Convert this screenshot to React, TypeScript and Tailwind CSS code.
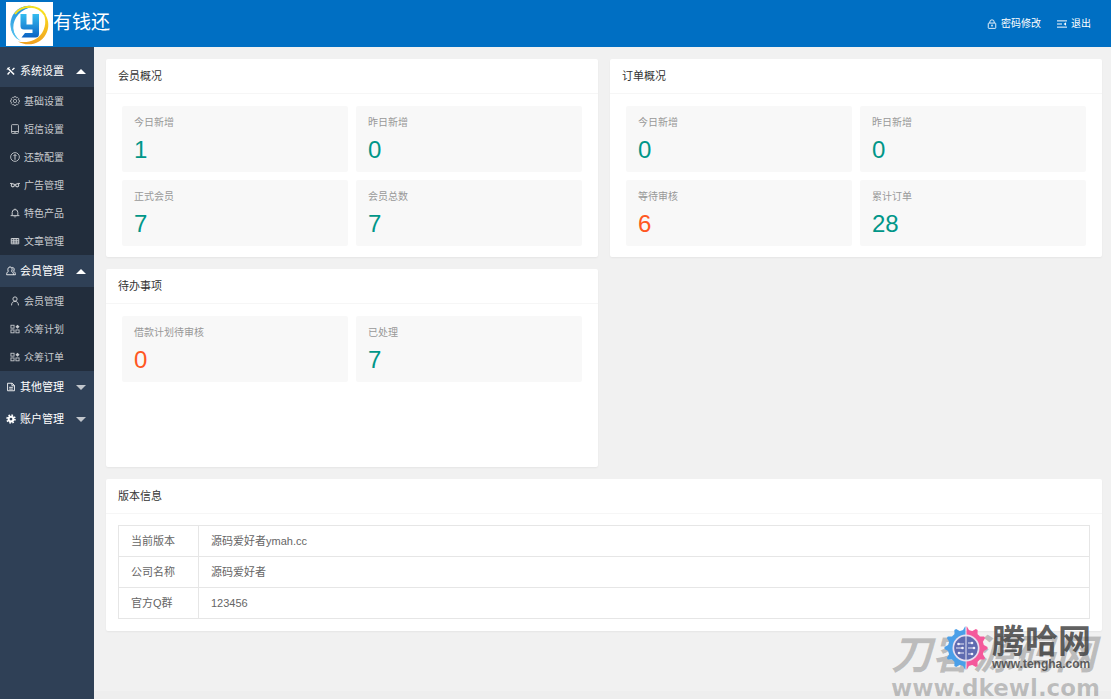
import type { ReactNode } from "react";
import clsx from "clsx";

type IconName =
  | "tools"
  | "cog"
  | "phone"
  | "coin"
  | "link"
  | "bell"
  | "grid"
  | "users"
  | "user"
  | "blocks"
  | "file"
  | "gear"
  | "lock"
  | "exit";

const iconShapes: Record<IconName, ReactNode> = {
  tools: (
    <>
      <path d="M2.5 3l10.500 10.500" strokeWidth="2.4" />
      <path d="M1.500 6L6 1.500" strokeWidth="1.6" />
      <path d="M13.5 3L10 6.500M6 9.5L2.500 13.500" strokeWidth="2.2" />
    </>
  ),
  cog: (
    <>
      <circle cx="8" cy="8" r="2.6" strokeWidth="1.2" />
      <path
        d="M6.500 1h3l.6 2 1.900-.8 2 2-.9 1.900 2 .6v2.800l-2 .6.9 1.900-2 2-1.900-.9-.6 2h-3l-.6-2-1.900.9-2-2 .9-1.900-2-.6V6.700l2-.6L2 4.200l2-2 1.900.8z"
        strokeWidth="1.2"
      />
    </>
  ),
  phone: (
    <>
      <rect x="2.5" y="1" width="11" height="14" rx="1.2" />
      <path d="M2.5 12h11M7 13.5h2" />
    </>
  ),
  coin: (
    <>
      <circle cx="8" cy="8" r="7" />
      <path d="M8 4v8.500M5.500 6.500L8 4l2.500 2.500" strokeWidth="1.600" />
    </>
  ),
  link: (
    <>
      <circle cx="4.500" cy="8.500" r="2.500" strokeWidth="1.800" />
      <circle cx="11.500" cy="8.500" r="2.500" strokeWidth="1.800" />
      <path d="M0 5.500h4M12 5.500h4M6.500 7.500h3" strokeWidth="1.600" />
    </>
  ),
  bell: (
    <>
      <path d="M3.5 12V7a4.5 4.5 0 019 0v5M1 12.200h14M8 1v1.5" strokeWidth="1.600" />
      <path d="M6.500 13.500a1.600 1.600 0 003 0" />
    </>
  ),
  grid: <path d="M2 4h12v8.500H2zM2 6.800h12M2 9.700h12M6 4v8.500M10 4v8.500" strokeWidth="1.600" />,
  users: (
    <>
      <path d="M3.5 9C2 4 4 1.500 6.500 1.500S11 4 9 8.800c2 .8 3 2.500 3 5.200H1c0-2.800 1-4.300 2.500-5z" />
      <path d="M10 2.200c3 0 4 3.500 2.200 6.300 1.800.8 2.800 2.500 2.800 5.500h-3" />
    </>
  ),
  user: (
    <>
      <circle cx="8" cy="4.800" r="3.400" strokeWidth="1.600" />
      <path d="M2.500 15c0-4.300 2-6.300 5.500-6.300s5.500 2 5.500 6.300" strokeWidth="1.600" />
    </>
  ),
  blocks: (
    <>
      <rect x="1.500" y="2" width="5" height="4.600" />
      <rect x="1.500" y="9.500" width="5" height="4.600" />
      <rect x="9.500" y="9.500" width="5" height="4.600" />
      <path d="M12 1l3.300 3.300L12 7.600 8.700 4.300z" fill="currentColor" stroke="none" />
    </>
  ),
  file: (
    <>
      <path d="M2.500 2h7.500l3.500 3.500V14h-11z" />
      <path d="M9.500 2v4h4M5 8.500h6M5 11.300h6" />
    </>
  ),
  gear: (
    <>
      <circle cx="8" cy="8" r="3.800" strokeWidth="3.200" />
      <circle cx="8" cy="8" r="6.300" strokeDasharray="2.500 2.450" strokeWidth="2.600" />
    </>
  ),
  lock: (
    <>
      <rect x="2" y="6.500" width="12" height="8.500" rx="1" />
      <path d="M4.500 6.500V4.800a3.500 3.500 0 017 0v1.700M8 9.300v3M6.800 10h2.400" />
    </>
  ),
  exit: (
    <>
      <path d="M0 3h16M0 8h8M0 13h16" strokeWidth="1.600" />
      <path d="M14.500 5.200v5.600L10.500 8z" fill="currentColor" stroke="none" />
    </>
  ),
};

function Icon({ name, className }: { name: IconName; className?: string }) {
  return (
    <svg
      viewBox="0 0 16 16"
      className={clsx("size-2.5 shrink-0", className)}
      fill="none"
      stroke="currentColor"
      strokeWidth="1.400"
      aria-hidden="true"
    >
      {iconShapes[name]}
    </svg>
  );
}

type Group = {
  label: string;
  icon: IconName;
  items: { label: string; icon: IconName }[];
};

const menu: Group[] = [
  {
    label: "系统设置",
    icon: "tools",
    items: [
      { label: "基础设置", icon: "cog" },
      { label: "短信设置", icon: "phone" },
      { label: "还款配置", icon: "coin" },
      { label: "广告管理", icon: "link" },
      { label: "特色产品", icon: "bell" },
      { label: "文章管理", icon: "grid" },
    ],
  },
  {
    label: "会员管理",
    icon: "users",
    items: [
      { label: "会员管理", icon: "user" },
      { label: "众筹计划", icon: "blocks" },
      { label: "众筹订单", icon: "blocks" },
    ],
  },
  { label: "其他管理", icon: "file", items: [] },
  { label: "账户管理", icon: "gear", items: [] },
];

type Stat = { label: string; value: number; alert?: boolean };

const memberStats: Stat[] = [
  { label: "今日新增", value: 1 },
  { label: "昨日新增", value: 0 },
  { label: "正式会员", value: 7 },
  { label: "会员总数", value: 7 },
];

const orderStats: Stat[] = [
  { label: "今日新增", value: 0 },
  { label: "昨日新增", value: 0 },
  { label: "等待审核", value: 6, alert: true },
  { label: "累计订单", value: 28 },
];

const todoStats: Stat[] = [
  { label: "借款计划待审核", value: 0, alert: true },
  { label: "已处理", value: 7 },
];

const versionRows = [
  ["当前版本", "源码爱好者ymah.cc"],
  ["公司名称", "源码爱好者"],
  ["官方Q群", "123456"],
];

function Logo() {
  return (
    <svg viewBox="0 0 47 44" className="h-11 w-[47px] bg-white" aria-hidden="true">
      <defs>
        <linearGradient id="ring" x1="0" y1="0" x2="0" y2="1">
          <stop offset="0" stopColor="#fbe21c" />
          <stop offset="1" stopColor="#f0a020" />
        </linearGradient>
        <linearGradient id="arc" x1="0" y1="0" x2="0" y2="1">
          <stop offset="0" stopColor="#1d8fdc" />
          <stop offset="1" stopColor="#5cc8f0" />
        </linearGradient>
        <linearGradient id="mark" x1="0" y1="0" x2="0" y2="1">
          <stop offset="0" stopColor="#35bdf0" />
          <stop offset="1" stopColor="#0b62c4" />
        </linearGradient>
      </defs>
      <path d="M28 4.500A18.500 18.500 0 0015 39C2 32 5 8 28 4.500z" fill="url(#arc)" />
      <path d="M28 4.500C3 8 2 30 15 39-1 33 1 5 28 4.500z" fill="url(#arc)" />
      <path d="M9 12A18.500 18.500 0 0139 13" fill="none" stroke="#f7e01e" strokeWidth="2" />
      <path
        d="M35 7.500C46 17 44 33 33 39.500 26 43.500 18 43 12 39.500 22 41.500 31 38.500 36 31 41 23 40 14 35 7.500z"
        fill="url(#ring)"
      />
      <path
        d="M14.500 12H20.500v10.500h6V12H33v20q0 3.500-3.500 3.500H15.500l3.500-4.500h7.500v-3.500H18q-3.500 0-3.500-3.500z"
        fill="url(#mark)"
      />
    </svg>
  );
}

function Sidebar() {
  return (
    <nav className="w-[94px] shrink-0 bg-[#2f4056] pt-2 text-white">
      {menu.map((group) => {
        const open = group.items.length > 0;
        return (
          <div key={group.label}>
            <button
              type="button"
              aria-expanded={open}
              className="flex h-8 w-full items-center pl-1.5 pr-2 text-[11px]"
            >
              <Icon name={group.icon} className="mr-1" />
              <span className="whitespace-nowrap">{group.label}</span>
              <svg
                viewBox="0 0 10 5"
                className={clsx("ml-auto h-[5px] w-2.5", !open && "rotate-180 opacity-70")}
                aria-hidden="true"
              >
                <path d="M0 5L5 0l5 5z" fill="currentColor" />
              </svg>
            </button>
            {open && (
              <ul className="bg-[#222d3c] text-[#c8cbcf]">
                {group.items.map((item) => (
                  <li key={item.label}>
                    <a href="#" className="flex h-7 items-center gap-1 pl-2.5 text-[10px]">
                      <Icon name={item.icon} />
                      {item.label}
                    </a>
                  </li>
                ))}
              </ul>
            )}
          </div>
        );
      })}
    </nav>
  );
}

function Card({ title, children }: { title: string; children: ReactNode }) {
  return (
    <section className="rounded-xs bg-white shadow-[0_1px_2px_rgba(0,0,0,0.05)]">
      <h2 className="h-[35px] border-b border-[#f6f6f6] px-3 text-[11px] leading-[34px] text-[#333]">
        {title}
      </h2>
      {children}
    </section>
  );
}

function StatCard({ title, stats }: { title: string; stats: Stat[] }) {
  return (
    <Card title={title}>
      <div className="grid min-h-[163px] grid-cols-2 content-start gap-2 px-4 pt-3 pb-[11px]">
        {stats.map((stat) => (
          <div key={stat.label} className="h-[66px] rounded-xs bg-[#f8f8f8] px-3 pt-2">
            <h3 className="text-[10px] leading-[18px] text-[#999]">{stat.label}</h3>
            <p
              className={clsx(
                "text-2xl leading-9",
                stat.alert ? "text-[#ff5722]" : "text-[#009688]",
              )}
            >
              {stat.value}
            </p>
          </div>
        ))}
      </div>
    </Card>
  );
}

function GearMark() {
  const teeth = Array.from({ length: 12 }, (_, i) => i * 30);
  return (
    <svg viewBox="0 0 44 44" className="size-11 shrink-0" aria-hidden="true">
      <defs>
        <linearGradient id="halves">
          <stop offset="0.500" stopColor="#4a9fe8" />
          <stop offset="0.500" stopColor="#f4599b" />
        </linearGradient>
        <mask id="gear-shape">
          <circle cx="22" cy="22" r="18" fill="#fff" />
          {teeth.map((a) => (
            <path key={a} d="M18.500 5L21 .5h2L25.500 5z" fill="#fff" transform={`rotate(${a} 22 22)`} />
          ))}
          <path d="M22 0v44" stroke="#000" />
        </mask>
      </defs>
      <rect width="44" height="44" fill="url(#halves)" mask="url(#gear-shape)" />
      <circle cx="22" cy="22" r="13.500" fill="#e8dff0" />
      <circle cx="22" cy="22" r="11.800" fill="#5f6bb0" />
      <g fill="none" stroke="#e8e6f4" strokeWidth="1">
        <path d="M22 9v26M14 18h6M12 22h7M15 27h5M24 17h4M24 22h6M24 28h4" />
      </g>
      <g fill="#f2f0fa">
        <circle cx="14.500" cy="18" r="1.300" />
        <circle cx="18.500" cy="22" r="1.300" />
        <circle cx="15" cy="27" r="1.300" />
        <circle cx="28" cy="17" r="1.300" />
        <circle cx="30" cy="22" r="1.300" />
        <circle cx="28" cy="28" r="1.300" />
      </g>
    </svg>
  );
}

// Site stamps that float over the bottom right corner of the page
function Watermarks() {
  return (
    <div className="pointer-events-none absolute right-3 bottom-0 h-[76px] w-[208px] font-bold whitespace-nowrap">
      <div className="absolute bottom-0 left-0 text-black/22">
        <p className="text-[41px] leading-[43px] italic">刀客源码网</p>
        <p className="font-['DejaVu_Sans'] text-[23px] leading-[22px]">www.dkewl.com</p>
      </div>
      <div className="absolute top-[3px] right-2 flex items-center gap-1">
        <GearMark />
        <div className="text-[#444]/85">
          <p className="text-[33px] leading-8">腾哈网</p>
          <p className="text-xs leading-3">www.tengha.com</p>
        </div>
      </div>
    </div>
  );
}

export default function App() {
  return (
    <div className="relative flex min-h-screen flex-col bg-[#f1f1f1] font-['Liberation_Sans','Noto_Sans_CJK_SC',sans-serif]">
      <header className="flex h-[47px] items-center bg-[#006fc3] pr-5 pl-1.5 text-white">
        <Logo />
        <h1 className="text-[19px]">有钱还</h1>
        <div className="ml-auto flex gap-4 text-[10px]">
          <a href="#" className="flex items-center gap-1">
            <Icon name="lock" />
            密码修改
          </a>
          <a href="#" className="flex items-center gap-1">
            <Icon name="exit" />
            退出
          </a>
        </div>
      </header>
      <div className="flex flex-1">
        <Sidebar />
        <div className="flex min-w-0 flex-1 flex-col">
          <main className="flex flex-1 flex-col gap-3 pt-3 pr-[9px] pl-3">
            <div className="grid grid-cols-2 gap-3">
              <StatCard title="会员概况" stats={memberStats} />
              <StatCard title="订单概况" stats={orderStats} />
              <StatCard title="待办事项" stats={todoStats} />
            </div>
            <Card title="版本信息">
              <div className="p-3 pt-[11px]">
                <table className="w-full border-collapse text-[11px] text-[#666]">
                  <tbody>
                    {versionRows.map(([label, value]) => (
                      <tr key={label} className="h-[31px]">
                        <th
                          scope="row"
                          className="w-20 border border-[#e6e6e6] px-3 text-left font-normal whitespace-nowrap"
                        >
                          {label}
                        </th>
                        <td className="border border-[#e6e6e6] px-3">{value}</td>
                      </tr>
                    ))}
                  </tbody>
                </table>
              </div>
            </Card>
          </main>
          <footer className="h-2 bg-[#eee]" />
        </div>
      </div>
      <Watermarks />
    </div>
  );
}
